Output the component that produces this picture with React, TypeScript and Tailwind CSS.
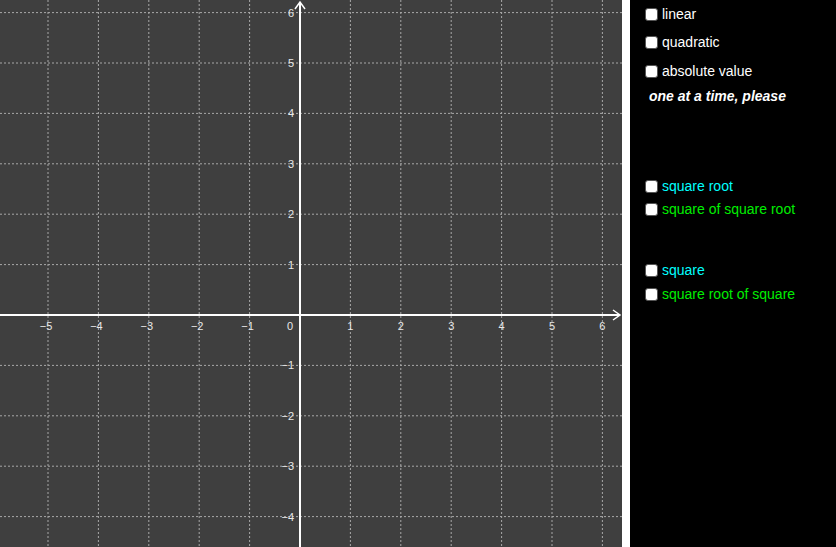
import React from "react";

const U = 50.4, OX = 300, OY = 315, W = 622, H = 547;

function Graph() {
  const xs: number[] = [];
  for (let k = -6; k <= 7; k++) xs.push(k);
  return (
    <svg width={W} height={H} className="block">
      <rect width={W} height={H} fill="#3f3f3f" />
      {xs.map(k => {
        const x = OX + k * U;
        return x > 0 && x < W && k !== 0 ? <line key={"v" + k} x1={x} y1={0} x2={x} y2={H} stroke="#a8a8a8" strokeWidth={1} strokeDasharray="2 2" /> : null;
      })}
      {xs.map(k => {
        const y = OY - k * U;
        return y > 0 && y < H && k !== 0 ? <line key={"h" + k} x1={0} y1={y} x2={W} y2={y} stroke="#a8a8a8" strokeWidth={1} strokeDasharray="2 2" /> : null;
      })}
      <line x1={0} y1={OY} x2={W - 2} y2={OY} stroke="#fff" strokeWidth={2} />
      <line x1={OX} y1={H} x2={OX} y2={2} stroke="#fff" strokeWidth={2} />
      <polyline points={`${W - 9},${OY - 5} ${W - 2},${OY} ${W - 9},${OY + 5}`} fill="none" stroke="#fff" strokeWidth={1.5} />
      <polyline points={`${OX - 5},${9} ${OX},${2} ${OX + 5},${9}`} fill="none" stroke="#fff" strokeWidth={1.5} />
      <g fill="#e8e8e8" fontSize={11} fontFamily="Liberation Sans, Arial, sans-serif">
        {[-5, -4, -3, -2, -1, 1, 2, 3, 4, 5, 6].map(k => (
          <text key={"xl" + k} x={OX + k * U - (k < 0 ? 2 : 0)} y={OY + 15} textAnchor="middle">{k < 0 ? "\u2212" + -k : k}</text>
        ))}
        {[-4, -3, -2, -1, 1, 2, 3, 4, 5, 6].map(k => (
          <text key={"yl" + k} x={OX - 6} y={OY - k * U + 4} textAnchor="end">{k < 0 ? "\u2212" + -k : k}</text>
        ))}
        <text x={OX - 7} y={OY + 15} textAnchor="end">0</text>
      </g>
    </svg>
  );
}

function Row({ label, color, className = "" }: { label: string; color: string; className?: string }) {
  return (
    <div className={"flex items-center gap-[4px] h-[20px] " + className}>
      <span className="w-[13px] h-[13px] bg-white rounded-[3px] border border-[#555]" />
      <span className={"text-[14px] " + color}>{label}</span>
    </div>
  );
}

export default function App() {
  return (
    <div className="flex w-[836px] h-[547px] bg-black overflow-hidden" style={{ fontFamily: "'Liberation Sans', Arial, sans-serif" }}>
      <Graph />
      <div className="w-[8px] h-full bg-white" />
      <div className="flex flex-col pl-[15px] pt-[4px]">
        <Row label="linear" color="text-white" />
        <Row label="quadratic" color="text-white" className="mt-[8px]" />
        <Row label="absolute value" color="text-white" className="mt-[9px]" />
        <div className="text-white italic font-bold text-[14px] pl-[4px] mt-[5px]">one at a time, please</div>
        <Row label="square root" color="text-[#00ffff]" className="mt-[69px]" />
        <Row label="square of square root" color="text-[#00ee00]" className="mt-[3px]" />
        <Row label="square" color="text-[#00ffff]" className="mt-[41px]" />
        <Row label="square root of square" color="text-[#00ee00]" className="mt-[4px]" />
      </div>
    </div>
  );
}
